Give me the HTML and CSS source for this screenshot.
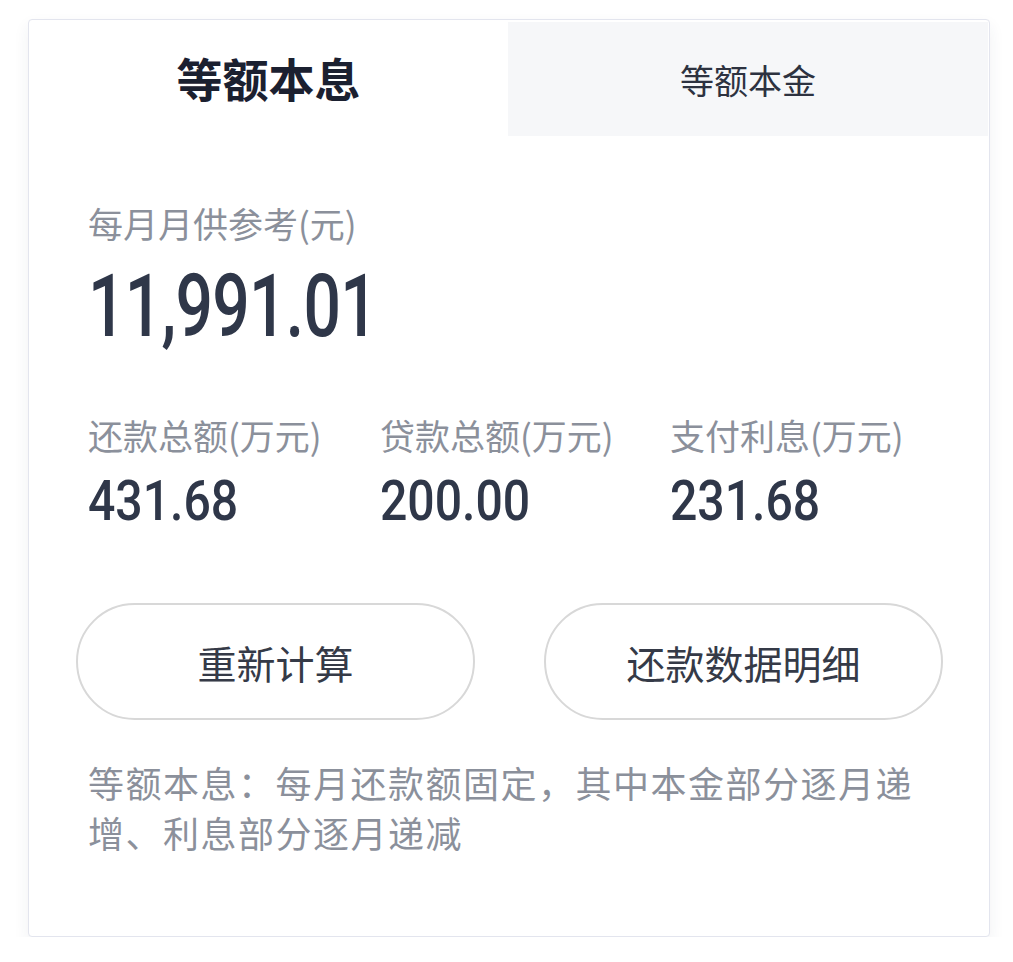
FILE: index.html
```html
<!DOCTYPE html>
<html lang="zh-CN">
<head>
<meta charset="utf-8">
<title>房贷计算结果</title>
<link rel="stylesheet" href="styles.css">
</head>
<body>
<div class="card">
  <div class="tabs">
    <div class="tab tab-active">等额本息</div>
    <div class="tab tab-idle">等额本金</div>
  </div>
  <div class="summary">
    <div class="label">每月月供参考(元)</div>
    <div class="big-number"><span class="num num-big">11,991.01</span></div>
    <div class="stats">
      <div class="stat">
        <div class="label">还款总额(万元)</div>
        <div class="value"><span class="num num-small">431.68</span></div>
      </div>
      <div class="stat">
        <div class="label">贷款总额(万元)</div>
        <div class="value"><span class="num num-small">200.00</span></div>
      </div>
      <div class="stat">
        <div class="label">支付利息(万元)</div>
        <div class="value"><span class="num num-small">231.68</span></div>
      </div>
    </div>
  </div>
  <div class="actions">
    <button class="btn">重新计算</button>
    <button class="btn">还款数据明细</button>
  </div>
  <p class="note">等额本息：每月还款额固定，其中本金部分逐月递增、利息部分逐月递减</p>
</div>
</body>
</html>
```
FILE: styles.css
```css
html, body {
  margin: 0;
  padding: 0;
  background: #ffffff;
}
body {
  font-family: "Noto Sans CJK SC", "Noto Sans", sans-serif;
  padding: 19px 0 0 28px;
}
.card {
  width: 960px;
  height: 916px;
  border: 1px solid #e3e5ee;
  border-radius: 4px;
  background: #fff;
  box-shadow: 0 7px 16px rgba(40, 50, 90, 0.07);
  display: flex;
  flex-direction: column;
  overflow: hidden;
}
.tabs {
  display: grid;
  grid-template-columns: 479px 1fr;
  height: 114px;
  padding: 2px 1px 0 0;
}
.tab {
  display: flex;
  align-items: center;
  justify-content: center;
}
.tab-active {
  font-size: 46px;
  font-weight: 700;
  color: #1b2030;
  padding-bottom: 4px;
}
.tab-idle {
  background: #f6f7f9;
  font-size: 34px;
  color: #2d3240;
}
.summary {
  padding: 67px 60px 0 59px;
}
.label {
  font-size: 35px;
  line-height: 40px;
  color: #8b909b;
  white-space: nowrap;
}
.num {
  display: block;
  font-family: "Roboto", "DejaVu Sans", sans-serif;
  font-weight: 500;
  color: #2f3749;
  transform-origin: left center;
  white-space: nowrap;
}
.big-number {
  display: flex;
  margin-top: 19px;
  font-size: 88px;
  line-height: 88px;
}
.num-big {
  letter-spacing: -1px;
  transform: scaleX(0.75);
}
.stats {
  display: grid;
  grid-template-columns: 292px 290px 1fr;
  margin-top: 65px;
}
.value {
  display: flex;
  margin-top: 18px;
  font-size: 56px;
  line-height: 56px;
}
.num-small {
  transform: scaleX(0.86);
}
.actions {
  display: flex;
  gap: 69px;
  padding: 74px 0 0 47px;
}
.btn {
  width: 399px;
  height: 117px;
  border: 2px solid #d8d8d8;
  border-radius: 60px;
  background: #fff;
  font-family: "Noto Sans CJK SC", "Noto Sans", sans-serif;
  font-size: 39px;
  color: #353a47;
  padding: 0;
}
.note {
  margin: 37px 0 0;
  padding: 0 60px 0 59px;
  font-size: 36px;
  line-height: 50px;
  letter-spacing: 1.5px;
  color: #8b909b;
}
```
